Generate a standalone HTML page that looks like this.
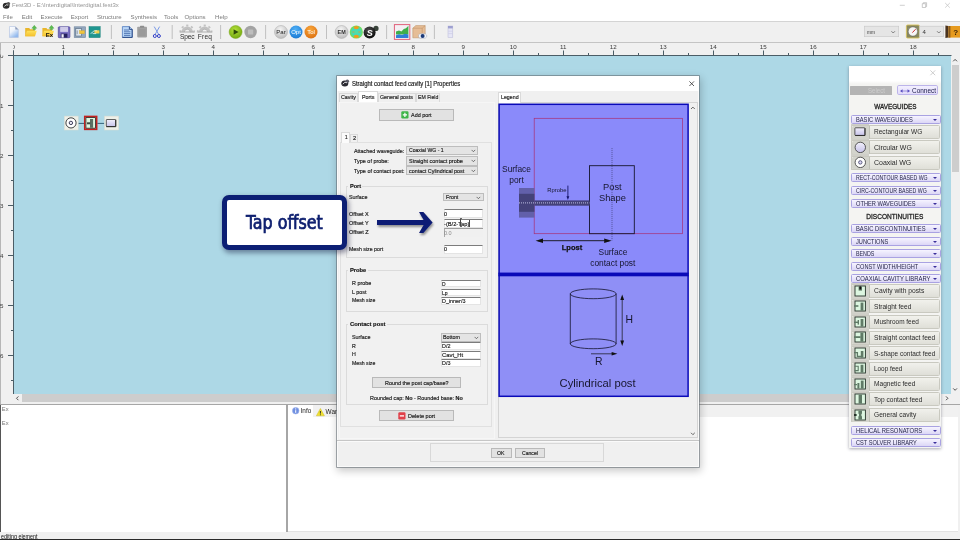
<!DOCTYPE html>
<html lang="en">
<head>
<meta charset="utf-8">
<title>Fest3D - Straight contact feed cavity Properties</title>
<style>
html,body{margin:0;padding:0;}
body{width:960px;height:540px;overflow:hidden;position:relative;background:#fff;font-family:"Liberation Sans","DejaVu Sans",sans-serif;font-size:6.5px;color:#222;}
#app{position:absolute;left:0;top:0;width:960px;height:540px;overflow:hidden;will-change:transform;}
#app div,#app span,#app svg{position:absolute;box-sizing:border-box;white-space:nowrap;}
svg text{white-space:pre;}
/* ---------- top chrome ---------- */
#titlebar{left:0;top:0;width:960px;height:11px;background:#fff;}
#titletext{left:12px;top:2.1px;font-size:6px;color:#959595;}
.wc{top:0;font-size:9px;color:#9a9a9a;}
#menubar{left:0;top:11px;width:960px;height:10px;background:#fff;}
#menubar span{top:2px;font-size:6.1px;color:#7a7a7a;}
#toolbar{left:0;top:21px;width:960px;height:22px;background:#f0f0f0;border-top:1px solid #d4d4d4;border-bottom:1px solid #c4c4c4;}
.tsep{top:3px;width:1px;height:14px;background:#b8b8b8;}
#ruler-h{left:0;top:43px;width:960px;height:13px;background:#f0f0f0;}
#ruler-v{left:0;top:56px;width:14px;height:348px;background:#f0f0f0;}
#canvas{left:14px;top:56px;width:937px;height:338px;background:#add8e6;}
</style>
</head>
<body>
<div id="app">
<!-- TITLE BAR -->
<div id="titlebar">
  <svg style="left:2px;top:1px" width="9" height="9" viewBox="0 0 9 9"><ellipse cx="4.2" cy="4.8" rx="3.4" ry="3" fill="#2a2a2a"/><circle cx="6.4" cy="2.6" r="1.7" fill="#555"/><path d="M2.3 5.6 Q4 2.6 6.2 4.2" stroke="#ddd" stroke-width="0.9" fill="none"/></svg>
  <span id="titletext">Fest3D - E:\Interdigital\Interdigital.fest3x</span>
  <svg style="left:896px;top:0" width="60" height="11" viewBox="0 0 60 11">
    <path d="M3.8 5.3h5" stroke="#c4c4c4" stroke-width="0.8"/>
    <path d="M26.3 3.7h3.4v3.8h-3.4z M27.3 3.7v-1h3.3v3.8h-0.9" stroke="#b4b4b4" stroke-width="0.7" fill="none"/>
    <path d="M49.2 3l4.6 4.6M53.8 3l-4.6 4.6" stroke="#c4c4c4" stroke-width="0.8"/>
  </svg>
</div>

<!-- MENU BAR -->
<div id="menubar">
  <span style="left:3px">File</span>
  <span style="left:21.7px">Edit</span>
  <span style="left:40.6px">Execute</span>
  <span style="left:70.7px">Export</span>
  <span style="left:96.9px">Structure</span>
  <span style="left:130.6px">Synthesis</span>
  <span style="left:164px">Tools</span>
  <span style="left:184.6px">Options</span>
  <span style="left:215px">Help</span>
</div>

<!-- TOOLBAR -->
<div id="toolbar">
  <svg style="left:0;top:0" width="960" height="20" viewBox="0 22 960 20">
    <defs>
      <linearGradient id="gNew" x1="0" y1="0" x2="0.6" y2="1"><stop offset="0" stop-color="#ffffff"/><stop offset="0.45" stop-color="#eef3fb"/><stop offset="1" stop-color="#8fb8ee"/></linearGradient>
      <linearGradient id="gFold" x1="0" y1="0" x2="0" y2="1"><stop offset="0" stop-color="#ffe25a"/><stop offset="1" stop-color="#f3bf2e"/></linearGradient>
      <radialGradient id="gGreen" cx="0.45" cy="0.35" r="0.7"><stop offset="0" stop-color="#b6e23a"/><stop offset="1" stop-color="#6fa40e"/></radialGradient>
      <radialGradient id="gGray" cx="0.45" cy="0.3" r="0.8"><stop offset="0" stop-color="#f4f4f4"/><stop offset="1" stop-color="#b4b4b4"/></radialGradient>
      <radialGradient id="gBlue" cx="0.45" cy="0.3" r="0.8"><stop offset="0" stop-color="#4fb0f6"/><stop offset="1" stop-color="#1473d0"/></radialGradient>
      <radialGradient id="gOr" cx="0.45" cy="0.3" r="0.8"><stop offset="0" stop-color="#f8a63a"/><stop offset="1" stop-color="#d96a0c"/></radialGradient>
      <radialGradient id="gRain" cx="0.5" cy="0.5" r="0.5"><stop offset="0" stop-color="#54e0a0"/><stop offset="0.6" stop-color="#3fd8c0"/><stop offset="1" stop-color="#7be04a"/></radialGradient>
      <radialGradient id="gBlk" cx="0.4" cy="0.3" r="0.8"><stop offset="0" stop-color="#4a4a4a"/><stop offset="1" stop-color="#050505"/></radialGradient>
    </defs>
    <!-- new -->
    <path d="M9.500 26.500h5.800l3 3v7.900h-8.800z" fill="url(#gNew)" stroke="#aebfe0" stroke-width="0.600"/>
    <path d="M15.300 26.500v3h3z" fill="#8e9cb8"/>
    <!-- open -->
    <path d="M25.200 28h4l1 1.300h4.600v7h-9.600z" fill="#e9b62c"/>
    <path d="M25.200 36.300l1.600-5.600h10l-1.800 5.600z" fill="url(#gFold)"/>
    <path d="M34.300 25.300l2.500 3h-1.400v1.500h-2.200v-1.500h-1.400z" fill="#5cbc50" stroke="#3a9436" stroke-width="0.300"/>
    <!-- export folder -->
    <path d="M42.400 28h4l1 1.300h4.600v7h-9.600z" fill="#e9b62c"/>
    <path d="M42.400 36.300l1.600-5.600h10l-1.800 5.600z" fill="url(#gFold)"/>
    <path d="M51.500 25.300l2.500 3h-1.400v1.500h-2.200v-1.500h-1.400z" fill="#5cbc50" stroke="#3a9436" stroke-width="0.300"/>
    <text x="45.700" y="36.800" font-family="Liberation Sans, sans-serif" font-weight="bold" font-size="6" fill="#111" textLength="7.400" lengthAdjust="spacingAndGlyphs">Ex</text>
    <!-- save -->
    <rect x="58.300" y="26.800" width="11.600" height="10.900" rx="0.800" fill="#7a70c2" stroke="#4d4496" stroke-width="0.700"/>
    <rect x="60.200" y="27.100" width="7.800" height="4.700" fill="#d9d5ee"/>
    <path d="M60.200 28.700h7.800M60.200 30.200h7.800" stroke="#b9b3de" stroke-width="0.400"/>
    <rect x="60.800" y="33.600" width="6.600" height="4" fill="#26225e"/>
    <rect x="61.500" y="34.200" width="2.200" height="3.400" fill="#f2f1fa"/>
    <!-- img1 -->
    <rect x="74.200" y="26.800" width="11.400" height="10.800" fill="#93a7be" stroke="#71869e" stroke-width="0.600"/>
    <rect x="75.800" y="28.600" width="5.600" height="7.400" fill="#dfe7ee" stroke="#55687c" stroke-width="0.600"/>
    <path d="M77.200 30.400v3.800" stroke="#55687c" stroke-width="0.600"/>
    <rect x="79.400" y="30.600" width="5.200" height="3.200" fill="#f0c43c" stroke="#c9a02a" stroke-width="0.300"/>
    <!-- img2 -->
    <rect x="89" y="26.600" width="11.200" height="11" fill="#1f958f" stroke="#17807a" stroke-width="0.500"/>
    <rect x="94.400" y="30.300" width="5" height="3.200" fill="#efd04c"/>
    <path d="M90.600 33.400c2 0 2-2.600 4-2.600h2.600M92.600 33.600h3.600" stroke="#eaf6f2" stroke-width="0.800" fill="none"/>
    <!-- doc -->
    <path d="M122.400 26.600h7l2.800 2.800v8h-9.800z" fill="#b9d6f7" stroke="#3f6fb8" stroke-width="0.700"/>
    <path d="M129.400 26.600v2.800h2.800M132.200 29.400v8h-9.800" fill="none" stroke="#24427e" stroke-width="0.900"/>
    <path d="M124 30h5M124 31.800h6.400M124 33.600h6.400M124 35.400h6.400" stroke="#3c62a4" stroke-width="0.800"/>
    <!-- clipboard gray -->
    <rect x="137.200" y="26.800" width="9.800" height="10.600" rx="0.800" fill="#a2a2a2"/>
    <rect x="140" y="25.800" width="4.200" height="2" rx="0.600" fill="#8e8e8e"/>
    <rect x="138.600" y="29.200" width="7" height="7" fill="#9a9a9a"/>
    <!-- scissors -->
    <path d="M154.2 26.6l4.6 8M159.6 26.6l-4.6 8" stroke="#7a9ae6" stroke-width="1"/>
    <circle cx="154.8" cy="36" r="1.5" fill="none" stroke="#3340c8" stroke-width="1"/>
    <circle cx="158.9" cy="36" r="1.5" fill="none" stroke="#3340c8" stroke-width="1"/>
    <!-- Spec / Freq -->
    <g fill="none" stroke="#c2c2c2" transform="translate(0 0.700)">
      <path d="M182.700 31.600a4.500 4.500 0 0 1 9 0" stroke-width="2.800"/><path d="M180.200 31.800a7 7 0 0 1 14 0" stroke-width="1.800" stroke-dasharray="2.200 2.750"/>
      <path d="M200.200 31.600a4.500 4.500 0 0 1 9 0" stroke-width="2.800"/><path d="M197.700 31.800a7 7 0 0 1 14 0" stroke-width="1.800" stroke-dasharray="2.200 2.750"/>
      <path d="M180.200 31.300h14M197.700 31.300h14" stroke-width="1.100" stroke="#adadad"/>
      <path d="M184.300 31.400a2.900 2.900 0 0 1 5.800 0M201.800 31.400a2.900 2.900 0 0 1 5.800 0" stroke-width="0.600" stroke="#9e9e9e"/>
    </g>
    <text x="180" y="38.700" font-family="Liberation Sans, sans-serif" font-size="6.600" fill="#2c2c2c" textLength="14.600" lengthAdjust="spacing">Spec</text>
    <text x="197.800" y="38.700" font-family="Liberation Sans, sans-serif" font-size="6.600" fill="#2c2c2c" textLength="14.200" lengthAdjust="spacing">Freq</text>
    <!-- play / stop -->
    <circle cx="235.6" cy="32" r="6.5" fill="url(#gGreen)" stroke="#7aa81a" stroke-width="0.5"/>
    <path d="M233.6 29.2l5 2.8l-5 2.8z" fill="#2f4a0a"/>
    <circle cx="250.6" cy="32" r="6.2" fill="#a3a3a3"/>
    <rect x="248" y="29.4" width="5.2" height="5.2" rx="0.6" fill="#bdbdbd"/>
    <!-- Par Opt Tol -->
    <circle cx="281" cy="32" r="6.5" fill="url(#gGray)" stroke="#a8a8a8" stroke-width="0.5"/>
    <text x="281" y="34.2" text-anchor="middle" font-family="Liberation Sans, sans-serif" font-size="6" fill="#222">Par</text>
    <circle cx="296" cy="32" r="6.5" fill="url(#gBlue)"/>
    <text x="296" y="34.2" text-anchor="middle" font-family="Liberation Sans, sans-serif" font-size="6" fill="#fff">Opt</text>
    <circle cx="311" cy="32" r="6.5" fill="url(#gOr)"/>
    <text x="311" y="34.2" text-anchor="middle" font-family="Liberation Sans, sans-serif" font-size="6" fill="#fff">Tol</text>
    <!-- EM / field / S -->
    <circle cx="341.6" cy="32" r="6.5" fill="url(#gGray)" stroke="#a8a8a8" stroke-width="0.5"/>
    <text x="341.6" y="34" text-anchor="middle" font-family="Liberation Sans, sans-serif" font-weight="bold" font-size="5.4" fill="#333">EM</text>
    <circle cx="356.3" cy="32" r="6.6" fill="url(#gRain)"/>
    <ellipse cx="356.3" cy="27.6" rx="2.6" ry="1.7" fill="#f29a1c"/>
    <ellipse cx="356.3" cy="36.4" rx="2.6" ry="1.7" fill="#f29a1c"/>
    <path d="M352.4 32h2M358.4 32h2" stroke="#e8a020" stroke-width="0.9"/>
    <circle cx="376" cy="28.4" r="2.6" fill="#39433a"/>
    <circle cx="369.6" cy="32.4" r="6" fill="url(#gBlk)"/>
    <text x="369.8" y="35.6" text-anchor="middle" font-family="Liberation Sans, sans-serif" font-weight="bold" font-style="italic" font-size="9" fill="#fff">S</text>
    <!-- graph -->
    <rect x="394.4" y="24.6" width="15.4" height="14.8" fill="#f4f0f4" stroke="#e0607a" stroke-width="1"/>
    <path d="M396 31.6l3-1.2 2.4 1 2.4-2.4 2.2-.8 2.4-2.4v8.600h-12.400z" fill="#3fae4a"/>
    <path d="M396 35.2l3-1 3 .8 3-1.200 3.4.6v3.600h-12.400z" fill="#2f7fd8"/>
    <!-- box w/ eye -->
    <path d="M412.800 28.200l3-2.600h9.400v9.400l-3 2.800h-9.400z" fill="#e6bd96" stroke="#b88a5e" stroke-width="0.5"/>
    <path d="M412.800 28.200h9.400v9.600M422.200 28.200l3-2.600" stroke="#b88a5e" stroke-width="0.5" fill="none"/>
    <ellipse cx="422.600" cy="36" rx="4.200" ry="2.400" fill="#f4f6fa" stroke="#8a94a8" stroke-width="0.4"/>
    <circle cx="422.600" cy="36" r="2" fill="#1c3a78"/>
    <!-- small doc -->
    <rect x="448" y="26" width="4.800" height="11.600" fill="#e6e6f6" stroke="#b9b9d8" stroke-width="0.5"/>
    <rect x="448" y="26" width="4.800" height="2.400" fill="#9ea0d0"/>
    <path d="M448.300 31.200h4.200M448.300 33.600h4.200" stroke="#c4c4e0" stroke-width="0.5"/>
    <!-- combos -->
    <rect x="864.300" y="26.200" width="34.400" height="10.500" fill="#e5e5e5" stroke="#c6c6c6" stroke-width="0.6"/>
    <text x="867" y="33.500" font-family="Liberation Sans, sans-serif" font-size="6" fill="#333" textLength="7.800" lengthAdjust="spacingAndGlyphs">mm</text>
    <path d="M891.400 31.200l1.800 1.800 1.800-1.800" stroke="#555" stroke-width="0.7" fill="none"/>
    <rect x="906.400" y="25" width="13" height="13" rx="1.200" fill="#86865e" stroke="#d8c25a" stroke-width="0.9"/>
    <circle cx="912.900" cy="31.500" r="4.600" fill="#f6f6f6" stroke="#555" stroke-width="0.4"/>
    <path d="M912.400 32.600l3.200-3.400" stroke="#d03030" stroke-width="1"/>
    <rect x="919.600" y="26.200" width="24" height="10.500" fill="#e5e5e5" stroke="#c6c6c6" stroke-width="0.6"/>
    <text x="922.400" y="33.600" font-family="Liberation Sans, sans-serif" font-size="6" fill="#333">4</text>
    <path d="M937 31.200l1.800 1.800 1.800-1.800" stroke="#555" stroke-width="0.7" fill="none"/>
    <!-- help book -->
    <path d="M945.400 25.400l3 .6v11.600l-3 .4z" fill="#4a3420"/>
    <path d="M948.400 26h11.600v11.600h-11.600z" fill="#e69a1e"/>
    <path d="M948.400 26h2v11.600h-2z" fill="#8a5a1a"/>
    <text x="955.600" y="35" text-anchor="middle" font-family="Liberation Sans, sans-serif" font-weight="bold" font-size="8" fill="#3a2208">?</text>
    <!-- separators -->
    <g stroke="#b4b4b4" stroke-width="0.8">
      <path d="M111.400 25v14M172.200 25v14M220.600 25v14M265.600 25v14M326.500 25v14M386.600 25v14M434.400 25v14"/>
    </g>
  </svg>
</div>
<div id="ruler-h"></div>
<div id="ruler-v"></div>
<div id="canvas"></div>
<!-- RULERS -->
<svg style="left:0;top:42px" width="960" height="362" viewBox="0 42 960 362">
<rect x="0" y="43" width="0.8" height="361" fill="#a8a8a8"/>
<path d="M8 55.5H951.5" stroke="#4b5d66" stroke-width="1"/>
<path d="M13.5 50.5V394" stroke="#4b5d66" stroke-width="1"/>
<path d="M13.5 50.5V55M38.5 53V55M63.5 50.5V55M88.5 53V55M113.5 50.5V55M138.5 53V55M163.5 50.5V55M188.5 53V55M213.5 50.5V55M238.5 53V55M263.5 50.5V55M288.5 53V55M313.5 50.5V55M338.5 53V55M363.5 50.5V55M388.5 53V55M413.5 50.5V55M438.5 53V55M463.5 50.5V55M488.5 53V55M513.5 50.5V55M538.5 53V55M563.5 50.5V55M588.5 53V55M613.5 50.5V55M638.5 53V55M663.5 50.5V55M688.5 53V55M713.5 50.5V55M738.5 53V55M763.5 50.5V55M788.5 53V55M813.5 50.5V55M838.5 53V55M863.5 50.5V55M888.5 53V55M913.5 50.5V55M938.5 53V55" stroke="#4b5d66" stroke-width="1"/>
<path d="M8 105.5H13M8 155.5H13M8 205.5H13M8 255.5H13M8 305.5H13M8 355.5H13M11 80.5H13M11 130.5H13M11 180.5H13M11 230.5H13M11 280.5H13M11 330.5H13M11 380.5H13" stroke="#4b5d66" stroke-width="1"/>
<g font-family="Liberation Sans, sans-serif" font-size="6.2" fill="#3a3a3a" text-anchor="middle">
<text x="13.2" y="49.4">0</text><text x="63.2" y="49.4">1</text><text x="113.2" y="49.4">2</text><text x="163.2" y="49.4">3</text><text x="213.2" y="49.4">4</text><text x="263.2" y="49.4">5</text><text x="313.2" y="49.4">6</text><text x="363.2" y="49.4">7</text><text x="413.2" y="49.4">8</text><text x="463.2" y="49.4">9</text><text x="513.2" y="49.4">10</text><text x="563.2" y="49.4">11</text><text x="613.2" y="49.4">12</text><text x="663.2" y="49.4">13</text><text x="713.2" y="49.4">14</text><text x="763.2" y="49.4">15</text><text x="813.2" y="49.4">16</text><text x="863.2" y="49.4">17</text><text x="913.2" y="49.4">18</text>
<text x="1.6" y="57.6">0</text><text x="1.6" y="107.6">1</text><text x="1.6" y="157.6">2</text><text x="1.6" y="207.6">3</text><text x="1.6" y="257.6">4</text><text x="1.6" y="307.6">5</text><text x="1.6" y="357.6">6</text>
</g>
<rect x="9" y="43.500" width="4.300" height="6.500" fill="#f0f0f0"/><rect x="0.800" y="50" width="6" height="5.600" fill="#f0f0f0"/>
</svg>
<!-- SCROLLBARS -->
<div style="left:14px;top:394px;width:946px;height:10px;background:#f0f0f0;"></div>
<div style="left:22px;top:394.4px;width:917px;height:7.8px;background:#cdcdcd;"></div>
<svg style="left:14px;top:394px" width="946" height="9" viewBox="14 394 946 9"><path d="M18.400 396.400l-1.900 1.900 1.900 1.900M946 396.400l1.900 1.900-1.900 1.900" stroke="#3c3c3c" stroke-width="0.9" fill="none"/></svg>
<div style="left:951px;top:56px;width:9px;height:338px;background:#f0f0f0;"></div>
<div style="left:952.2px;top:64.8px;width:6.7px;height:107px;background:#cdcdcd;"></div>
<svg style="left:951px;top:56px" width="9" height="338" viewBox="951 56 9 338"><path d="M953.200 61.300l1.900-1.900 1.900 1.900M953.200 388.400l1.900 1.900 1.900-1.900" stroke="#3c3c3c" stroke-width="0.900" fill="none"/></svg>

<!-- BOTTOM PANELS -->
<div style="left:0;top:403.800px;width:960px;height:1.200px;background:#a6a6a6;"></div>
<div style="left:0;top:405px;width:286.400px;height:127px;background:#fff;border-left:1.200px solid #555;">
  <span style="left:0.800px;top:1.200px;font-size:5.800px;color:#777;">Ex</span>
  <span style="left:0.800px;top:15px;font-size:5.800px;color:#777;">Ex</span>
</div>
<div style="left:286.400px;top:405px;width:1.600px;height:127px;background:#a6a6a6;"></div>
<div style="left:288px;top:405px;width:672px;height:127px;background:#fff;">
  <div style="left:0;top:0;width:670px;height:12px;background:#f1f1f1;"></div>
  <div style="left:0;top:0;width:25px;height:12.400px;background:#fff;"></div>
  <svg style="left:3.600px;top:2.400px" width="8" height="8" viewBox="0 0 8 8"><circle cx="3.700" cy="3.700" r="3.300" fill="#6f8fe0" stroke="#9fb4ec" stroke-width="0.600"/><path d="M3.700 3.200v2.600" stroke="#fff" stroke-width="1"/><circle cx="3.700" cy="1.900" r="0.600" fill="#fff"/></svg>
  <span style="left:12.600px;top:2.200px;font-size:6.400px;color:#222;">Info</span>
  <svg style="left:27.600px;top:2.600px" width="9" height="9" viewBox="0 0 9 9"><path d="M4.400 0.500l4 7.300h-8z" fill="#f2e230" stroke="#c8b820" stroke-width="0.500"/><path d="M4.400 3v2.600" stroke="#222" stroke-width="0.900"/><circle cx="4.400" cy="6.700" r="0.500" fill="#222"/></svg>
  <span style="left:37.600px;top:2.800px;font-size:6.400px;color:#222;">Warnings</span>
  <div style="left:669.600px;top:0;width:0.800px;height:126px;background:#e2e2e2;"></div>
  <div style="left:670.400px;top:0;width:1.600px;height:127px;background:#f0f0f0;"></div>
  <div style="left:0;top:126px;width:670px;height:0.800px;background:#e2e2e2;"></div>
</div>
<!-- STATUS BAR -->
<div style="left:0;top:532px;width:960px;height:8px;background:#f0f0f0;">
  <span style="transform:scaleX(0.844);transform-origin:0 50%;left:1.2px;top:0.5px;font-size:6.4px;color:#111;">editing element</span>
</div>
<div style="left:0;top:538.600px;width:960px;height:1.400px;background:#2a2a2a;"></div>
<!-- CANVAS NODES -->
<svg style="left:60px;top:112px" width="64" height="22" viewBox="60 112 64 22">
  <defs><linearGradient id="gLav" x1="0" y1="0" x2="0" y2="1"><stop offset="0" stop-color="#f2f0fb"/><stop offset="1" stop-color="#c6c2ea"/></linearGradient></defs>
  <path d="M78 123.400h6.400M97.400 123.400h7" stroke="#34627a" stroke-width="1"/>
  <rect x="64.300" y="116.100" width="13.900" height="13.900" fill="#eef0e8" stroke="#d9dbd0" stroke-width="0.500"/>
  <circle cx="71" cy="122.900" r="5.100" fill="#fff" stroke="#2c2c2c" stroke-width="0.900"/>
  <circle cx="70.900" cy="122.900" r="1.700" fill="#ecebf6" stroke="#3c3c58" stroke-width="1"/>
  <rect x="84.700" y="116.400" width="12" height="13" fill="#ddf6df" stroke="#c4201e" stroke-width="1.500"/>
  <rect x="85.900" y="117.600" width="9.600" height="10.600" fill="none" stroke="#2a1414" stroke-width="0.800"/>
  <rect x="90" y="119" width="3.100" height="8.800" fill="#5a6f62"/>
  <rect x="87" y="122.300" width="3.200" height="2" fill="#3c4a42"/>
  <rect x="104.500" y="116.100" width="14.200" height="13.900" fill="#eef0e8" stroke="#d9dbd0" stroke-width="0.500"/>
  <rect x="106.300" y="119.500" width="9.300" height="7" rx="0.500" fill="url(#gLav)" stroke="#3a3a3a" stroke-width="0.800"/>
  <path d="M106.300 126.700h9.500v-7" fill="none" stroke="#2a2a2a" stroke-width="1"/>
</svg>
<!-- ELEMENT PALETTE -->
<style>
#pal{left:849px;top:66px;width:92.400px;height:382px;background:#f4f4f2;box-shadow:0 1px 3px rgba(60,60,80,0.450);font-family:"Liberation Sans","DejaVu Sans",sans-serif;}
#pal .hd{left:2px;width:89.600px;height:9px;border:0.700px solid #a9a2e2;border-radius:1.500px;background:linear-gradient(#f6f4ff,#dcd7f6);font-size:6.3px;color:#26264a;line-height:7.8px;}
#pal .hd span{left:3.8px;top:0;}
#pal .fx{transform-origin:0 50%;} #pal .fc{transform-origin:50% 50%;position:relative !important;display:inline-block;}
#pal .hd i{position:absolute;right:3px;top:3px;width:0;height:0;border-left:2.2px solid transparent;border-right:2.2px solid transparent;border-top:2.4px solid #3a2f9a;}
#pal .ttl{left:0;width:92px;text-align:center;font-size:7.3px;color:#222;-webkit-text-stroke:0.3px #222;}
#pal .row{left:1.800px;width:88.800px;height:14px;background:linear-gradient(#f1f1ec,#dfdfd8);border:0.600px solid #c9c9c0;border-radius:1.500px;}
#pal .row b{position:absolute;left:0;top:0;width:17.6px;height:12.800px;background:#d3d4cc;border-right:0.600px solid #bfc0b6;border-radius:1.500px 0 0 1.500px;}
#pal .row span{left:22.3px;top:2.600px;font-size:6.7px;color:#2a2a2a;}
#pal .row svg{left:2.4px;top:-0.2px;}
#pal .strip{left:1.7px;width:18.2px;background:#cfcfc8;}
</style>
<div id="pal">
<div style="left:0;top:0;width:92.4px;height:18.4px;background:linear-gradient(#fff 0,#fff 82%,#f4f4f2 100%);"></div>
<svg style="left:80px;top:2.500px" width="8" height="8" viewBox="0 0 8 8"><path d="M1.400 1.400l4.800 4.800M6.200 1.400l-4.800 4.800" stroke="#c2c2c2" stroke-width="0.800"/></svg>
<div style="left:1.4px;top:19.6px;width:41.8px;height:9.8px;background:#b4b4b4;border-radius:0.6px;"><span class="fx" style="transform:scaleX(0.928);left:17.6px;top:1px;font-size:6.6px;color:#cdcdcd;">Select</span></div>
<div style="left:47.600px;top:19.400px;width:41.400px;height:10px;background:linear-gradient(#f3f0ff,#e2dcfa);border-radius:1.8px;border:0.7px solid #bcb4ea;"><svg style="left:2.6px;top:2.6px" width="11" height="4" viewBox="0 0 12 4"><path d="M1.200 2h8.600" stroke="#6e62cc" stroke-width="0.700"/><path d="M0 2l2.800-1.800v3.600zM11 2l-2.800-1.800v3.600z" fill="#5a4ec0"/></svg><span class="fx" style="transform:scaleX(0.948);left:14.6px;top:0.9px;font-size:6.8px;color:#20204e;">Connect</span></div>
<div class="strip" style="top:57.9px;height:46.1px"></div>
<div class="strip" style="top:217.2px;height:139.2px"></div>
<div class="ttl" style="top:36.1px"><span class="fc" style="transform:scaleX(0.871);">WAVEGUIDES</span></div>
<div class="hd" style="top:48.5px"><span class="fx" style="transform:scaleX(0.905);">BASIC WAVEGUIDES</span><i></i></div>
<div class="row" style="top:58.8px"><b></b><svg width="12" height="12" viewBox="0 0 12 12"><rect x="0.900" y="1.800" width="10" height="7.600" rx="0.600" fill="url(#gLav)" stroke="#333" stroke-width="0.800"/><path d="M1.200 9.500h9.800v-7.400" fill="none" stroke="#2a2a2a" stroke-width="0.900"/></svg><span class="fx" style="transform:scaleX(0.979);">Rectangular WG</span></div>
<div class="row" style="top:74.2px"><b></b><svg width="12" height="12" viewBox="0 0 12 12"><circle cx="6.300" cy="6.400" r="5.200" fill="url(#gLav)" stroke="#333" stroke-width="0.800"/></svg><span class="fx" style="transform:scaleX(1.038);">Circular WG</span></div>
<div class="row" style="top:89.6px"><b></b><svg width="12" height="12" viewBox="0 0 12 12"><circle cx="6.300" cy="6.400" r="5.200" fill="#fff" stroke="#333" stroke-width="0.800"/><circle cx="6.300" cy="6.400" r="1.700" fill="#dcd8f4" stroke="#3c3c66" stroke-width="0.800"/></svg><span class="fx" style="transform:scaleX(1.045);">Coaxial WG</span></div>
<div class="hd" style="top:107.4px"><span class="fx" style="transform:scaleX(0.830);">RECT-CONTOUR BASED WG</span><i></i></div>
<div class="hd" style="top:120.1px"><span class="fx" style="transform:scaleX(0.833);">CIRC-CONTOUR BASED WG</span><i></i></div>
<div class="hd" style="top:132.8px"><span class="fx" style="transform:scaleX(0.906);">OTHER WAVEGUIDES</span><i></i></div>
<div class="ttl" style="top:145.6px"><span class="fc" style="transform:scaleX(0.895);">DISCONTINUITIES</span></div>
<div class="hd" style="top:157.9px"><span class="fx" style="transform:scaleX(0.921);">BASIC DISCONTINUITIES</span><i></i></div>
<div class="hd" style="top:170.5px"><span class="fx" style="transform:scaleX(0.896);">JUNCTIONS</span><i></i></div>
<div class="hd" style="top:183.0px"><span class="fx" style="transform:scaleX(0.843);">BENDS</span><i></i></div>
<div class="hd" style="top:195.6px"><span class="fx" style="transform:scaleX(0.892);">CONST WIDTH/HEIGHT</span><i></i></div>
<div class="hd" style="top:208.0px"><span class="fx" style="transform:scaleX(0.936);">COAXIAL CAVITY LIBRARY</span><i></i></div>
<div class="row" style="top:217.9px"><b></b><svg width="12" height="12" viewBox="0 0 12 12"><rect x="1" y="1" width="10.400" height="10" fill="#dcf6e0" stroke="#26342a" stroke-width="0.900"/><rect x="4.600" y="1.400" width="3.400" height="4.200" fill="#5f7a66"/><rect x="5.400" y="1.400" width="1.800" height="3" fill="#111"/></svg><span class="fx" style="transform:scaleX(1.000);">Cavity with posts</span></div>
<div class="row" style="top:233.4px"><b></b><svg width="12" height="12" viewBox="0 0 12 12"><rect x="1" y="1" width="10.400" height="10" fill="#dcf6e0" stroke="#26342a" stroke-width="0.900"/><rect x="6.600" y="2.600" width="2.800" height="8" fill="#5f7a66"/><rect x="0" y="5.200" width="4.400" height="1.600" fill="#5f7a66"/></svg><span class="fx" style="transform:scaleX(0.984);">Straight feed</span></div>
<div class="row" style="top:248.9px"><b></b><svg width="12" height="12" viewBox="0 0 12 12"><rect x="1" y="1" width="10.400" height="10" fill="#dcf6e0" stroke="#26342a" stroke-width="0.900"/><rect x="6.600" y="3" width="2.800" height="7.600" fill="#5f7a66"/><rect x="0" y="5.600" width="4" height="1.400" fill="#5f7a66"/><rect x="3.600" y="4" width="1.400" height="4.600" fill="#5f7a66"/></svg><span class="fx" style="transform:scaleX(0.966);">Mushroom feed</span></div>
<div class="row" style="top:264.5px"><b></b><svg width="12" height="12" viewBox="0 0 12 12"><rect x="1" y="1" width="10.400" height="10" fill="#dcf6e0" stroke="#26342a" stroke-width="0.900"/><rect x="6.400" y="1.600" width="3" height="9" fill="#5f7a66"/><rect x="0" y="5.200" width="6.600" height="1.800" fill="#5f7a66"/></svg><span class="fx" style="transform:scaleX(0.999);">Straight contact feed</span></div>
<div class="row" style="top:280.0px"><b></b><svg width="12" height="12" viewBox="0 0 12 12"><rect x="1" y="1" width="10.400" height="10" fill="#dcf6e0" stroke="#26342a" stroke-width="0.900"/><rect x="6.800" y="4" width="2.600" height="6.600" fill="#5f7a66"/><path d="M0 5.600h3.400v3.800h3.600" stroke="#5f7a66" stroke-width="1.300" fill="none"/></svg><span class="fx" style="transform:scaleX(0.970);">S-shape contact feed</span></div>
<div class="row" style="top:295.5px"><b></b><svg width="12" height="12" viewBox="0 0 12 12"><rect x="1" y="1" width="10.400" height="10" fill="#dcf6e0" stroke="#26342a" stroke-width="0.900"/><rect x="6.600" y="2.800" width="2.800" height="7.800" fill="#5f7a66"/><path d="M0.600 4.200h3.600v4.400h-3.600" stroke="#5f7a66" stroke-width="1.100" fill="none"/></svg><span class="fx" style="transform:scaleX(0.954);">Loop feed</span></div>
<div class="row" style="top:310.9px"><b></b><svg width="12" height="12" viewBox="0 0 12 12"><rect x="1" y="1" width="10.400" height="10" fill="#dcf6e0" stroke="#26342a" stroke-width="0.900"/><rect x="6.800" y="2.600" width="2.800" height="8" fill="#5f7a66"/><rect x="3.400" y="5" width="2" height="5.600" fill="#5f7a66"/><rect x="0" y="6" width="3" height="1.200" fill="#5f7a66"/></svg><span class="fx" style="transform:scaleX(0.983);">Magnetic feed</span></div>
<div class="row" style="top:326.3px"><b></b><svg width="12" height="12" viewBox="0 0 12 12"><rect x="1" y="1" width="10.400" height="10" fill="#dcf6e0" stroke="#26342a" stroke-width="0.900"/><rect x="4.600" y="1.600" width="3.400" height="9" fill="#5f7a66"/></svg><span class="fx" style="transform:scaleX(0.986);">Top contact feed</span></div>
<div class="row" style="top:341.8px"><b></b><svg width="12" height="12" viewBox="0 0 12 12"><rect x="1" y="1" width="10.400" height="10" fill="#dcf6e0" stroke="#26342a" stroke-width="0.900"/><rect x="4.400" y="1.600" width="3.600" height="9" fill="#5f7a66"/><rect x="0" y="5" width="2.600" height="2" fill="#26342a"/><rect x="3" y="4.800" width="2" height="2.400" fill="#dcf6e0"/><rect x="7.400" y="4.800" width="2.400" height="2.400" fill="#dcf6e0"/></svg><span class="fx" style="transform:scaleX(0.987);">General cavity</span></div>
<div class="hd" style="top:360.2px"><span class="fx" style="transform:scaleX(0.930);">HELICAL RESONATORS</span><i></i></div>
<div class="hd" style="top:372.4px"><span class="fx" style="transform:scaleX(0.894);">CST SOLVER LIBRARY</span><i></i></div>
</div>
<!-- PROPERTIES DIALOG -->
<style>
#dlg{left:336.6px;top:76px;width:362.4px;height:391px;background:#f0f0f0;box-shadow:inset 0 0 0 1px #fafafa,0 0 0 0.8px rgba(100,108,115,0.72),1px 3px 8px 1px rgba(0,0,0,0.22);}
#dlg .t{font-size:6.2px;line-height:7.2px;height:7.2px;color:#1c1c1c;transform-origin:0 50%;-webkit-text-stroke:0.18px #1c1c1c;}
#dlg .b{font-weight:bold;color:#111;}
#dlg .g{color:#8c8c8c;-webkit-text-stroke:0;}
#dlg .cb{background:#e4e4e4;border:0.6px solid #bdbdbd;}
#dlg .fld{background:#fff;border:0.6px solid #e4e4e4;border-top:0.8px solid #7c7c7c;}
#dlg .btn{background:#e2e2e2;border:0.6px solid #b9b9b9;}
#dlg .gb{border:0.6px solid #dbdbdb;}
#dlg .lbl{background:#f0f0f0;}
</style>
<div id="dlg">
<div style="left:0px;top:0px;width:362.4px;height:15.4px;background:#fff;"></div>
<svg style="left:4.2px;top:3px" width="9" height="8" viewBox="0 0 9 8"><ellipse cx="3.8" cy="4.4" rx="3.5" ry="3" fill="#2c2c34"/><circle cx="6.3" cy="2.2" r="1.8" fill="#5a5a66"/><path d="M1.8 5.2Q3.8 2 6 3.8" stroke="#e6e6ea" stroke-width="0.9" fill="none"/></svg>
<span class="t " style="transform:scaleX(0.929);left:15.1px;top:3.9px;font-size:6.4px;color:#222;">Straight contact feed cavity [1] Properties</span>
<svg style="left:351.8px;top:3.5px" width="8" height="8" viewBox="0 0 8 8"><path d="M1.4 1.4l4.6 4.6M6 1.4l-4.6 4.6" stroke="#333" stroke-width="0.8"/></svg>
<div style="left:2.2px;top:16.8px;width:19.2px;height:9.4px;background:#f0f0f0;border:0.6px solid #dadada;border-bottom:none;"></div>
<div style="left:41px;top:16.8px;width:38.2px;height:9.4px;background:#f0f0f0;border:0.6px solid #dadada;border-bottom:none;"></div>
<div style="left:79.2px;top:16.8px;width:24px;height:9.4px;background:#f0f0f0;border:0.6px solid #dadada;border-bottom:none;"></div>
<div style="left:21.4px;top:15.4px;width:19.6px;height:11.2px;background:#fff;border:0.6px solid #dadada;border-bottom:none;"></div>
<span class="t " style="transform:scaleX(0.866);left:4.3px;top:17.3px;">Cavity</span>
<span class="t " style="transform:scaleX(0.865);left:25.1px;top:16.7px;">Ports</span>
<span class="t " style="transform:scaleX(0.851);left:43.4px;top:17.3px;">General posts</span>
<span class="t " style="transform:scaleX(0.835);left:81.2px;top:17.3px;">EM Field</span>
<div style="left:2px;top:26.2px;width:156.8px;height:336.4px;background:#f1f1f1;border:0.6px solid #f6f6f6;"></div>
<div class="btn" style="left:42.6px;top:33.4px;width:74.6px;height:11.2px;"></div>
<svg style="left:64.4px;top:35.2px" width="8" height="8" viewBox="0 0 8 8"><rect x="0.3" y="0.3" width="7.2" height="7.2" rx="1.2" fill="#3fb54a"/><path d="M1.8 3.9h4.2M3.9 1.8v4.2" stroke="#fff" stroke-width="1.2"/></svg>
<span class="t " style="transform:scaleX(0.881);left:74.4px;top:35px;">Add port</span>
<div style="left:3.8px;top:66px;width:151.4px;height:285.2px;background:#f1f1f1;border:0.6px solid #e0e0e0;"></div>
<div style="left:4.6px;top:56px;width:9px;height:10.6px;background:#fbfbfb;border:0.6px solid #dadada;border-bottom:none;"></div>
<div style="left:13.6px;top:57.8px;width:7.8px;height:8.2px;background:#f0f0f0;border:0.6px solid #dadada;border-bottom:none;"></div>
<span class="t " style="transform:scaleX(0.753);left:8px;top:57.1px;">1</span>
<span class="t " style="transform:scaleX(0.927);left:16px;top:58.1px;">2</span>
<span class="t " style="transform:scaleX(0.874);left:17.4px;top:70.5px;">Attached waveguide:</span>
<div class="cb" style="left:69.9px;top:69.6px;width:72px;height:9.7px;"></div>
<span class="t " style="transform:scaleX(0.825);left:72.5px;top:70.4px;">Coaxial WG - 1</span>
<svg style="left:134.5px;top:72.8px" width="5" height="4" viewBox="0 0 5 4"><path d="M0.6 0.9l1.8 1.8 1.8-1.800" stroke="#444" stroke-width="0.7" fill="none"/></svg>
<span class="t " style="transform:scaleX(0.882);left:17.4px;top:80.8px;">Type of probe:</span>
<div class="cb" style="left:69.9px;top:80px;width:72px;height:9.5px;"></div>
<span class="t " style="transform:scaleX(0.890);left:72.5px;top:80.8px;">Straight contact probe</span>
<svg style="left:134.5px;top:83.2px" width="5" height="4" viewBox="0 0 5 4"><path d="M0.6 0.9l1.8 1.8 1.8-1.800" stroke="#444" stroke-width="0.7" fill="none"/></svg>
<span class="t " style="transform:scaleX(0.884);left:17.4px;top:90.9px;">Type of contact post:</span>
<div class="cb" style="left:69.9px;top:90.1px;width:72px;height:9.3px;"></div>
<span class="t " style="transform:scaleX(0.869);left:72.5px;top:90.8px;">contact Cylindrical post</span>
<svg style="left:134.5px;top:93.2px" width="5" height="4" viewBox="0 0 5 4"><path d="M0.6 0.9l1.8 1.8 1.8-1.800" stroke="#444" stroke-width="0.7" fill="none"/></svg>
<div class="gb" style="left:9px;top:109.8px;width:142px;height:72px;"></div>
<div style="left:11.6px;top:106.8px;width:14.2px;height:6px;background:#f1f1f1;"></div>
<span class="t b" style="transform:scaleX(0.897);left:13.1px;top:105.8px;">Port</span>
<span class="t " style="transform:scaleX(0.867);left:12.7px;top:117px;">Surface</span>
<div class="cb" style="left:106.5px;top:116.6px;width:40.5px;height:8.9px;"></div>
<span class="t " style="transform:scaleX(0.851);left:109.4px;top:117.1px;">Front</span>
<svg style="left:139.6px;top:119.5px" width="5" height="4" viewBox="0 0 5 4"><path d="M0.6 0.9l1.8 1.8 1.8-1.800" stroke="#444" stroke-width="0.7" fill="none"/></svg>
<span class="t " style="transform:scaleX(0.885);left:12.7px;top:133.5px;">Offset X</span>
<div class="fld" style="left:107px;top:133.4px;width:39.2px;height:8.9px;"></div>
<span class="t " style="transform:scaleX(0.869);left:107.9px;top:134px;">0</span>
<span class="t " style="transform:scaleX(0.890);left:12.7px;top:142.8px;">Offset Y</span>
<div class="fld" style="left:107px;top:143px;width:39.2px;height:9px;"></div>
<span class="t " style="transform:scaleX(0.919);left:107.9px;top:143.6px;">-(B/2-Tap)</span>
<span class="t " style="transform:scaleX(0.899);left:12.7px;top:152.4px;">Offset Z</span>
<div style="border-top:0.7px solid #9c9c9c;border-left:0.6px solid #a8a8a8;background:#f0f0f0;left:107px;top:152.1px;width:39.2px;height:9.3px;"></div>
<span class="t g" style="transform:scaleX(0.894);left:107.9px;top:152.8px;">0.0</span>
<span class="t " style="transform:scaleX(0.848);left:12.7px;top:168.8px;">Mesh size port</span>
<div class="fld" style="left:107px;top:169px;width:39.2px;height:8.6px;"></div>
<span class="t " style="transform:scaleX(0.869);left:107.9px;top:169.4px;">0</span>
<div style="left:123.9px;top:142.6px;width:0.5px;height:8px;background:#444;"></div>
<div style="left:123.1px;top:142.4px;width:2.1px;height:0.5px;background:#666;"></div>
<div style="left:123.1px;top:150.3px;width:2.1px;height:0.5px;background:#666;"></div>
<div style="left:132.6px;top:144.2px;width:0.5px;height:6.8px;background:#444;"></div>
<div class="gb" style="left:9px;top:194px;width:142px;height:41.6px;"></div>
<div style="left:11.6px;top:191px;width:19.4px;height:6px;background:#f1f1f1;"></div>
<span class="t b" style="transform:scaleX(0.929);left:13.1px;top:190px;">Probe</span>
<span class="t " style="transform:scaleX(0.872);left:15.1px;top:203.4px;">R probe</span>
<div class="fld" style="left:104.6px;top:203.8px;width:40px;height:7.7px;"></div>
<span class="t " style="transform:scaleX(0.806);left:105.5px;top:203.7px;">D</span>
<span class="t " style="transform:scaleX(0.865);left:15.1px;top:212.2px;">L post</span>
<div class="fld" style="left:104.6px;top:212.6px;width:40px;height:7.5px;"></div>
<span class="t " style="transform:scaleX(0.813);left:105.5px;top:212.5px;">Lp</span>
<span class="t " style="transform:scaleX(0.836);left:15.1px;top:220.4px;">Mesh size</span>
<div class="fld" style="left:104.6px;top:221px;width:40px;height:7.5px;"></div>
<span class="t " style="transform:scaleX(0.872);left:105.5px;top:220.8px;">D_inner/3</span>
<div class="gb" style="left:9px;top:247.6px;width:142px;height:81.7px;"></div>
<div style="left:11.6px;top:244.6px;width:38.4px;height:6px;background:#f1f1f1;"></div>
<span class="t b" style="transform:scaleX(0.934);left:13.1px;top:243.6px;">Contact post</span>
<span class="t " style="transform:scaleX(0.867);left:15.1px;top:257.1px;">Surface</span>
<div class="cb" style="left:104.6px;top:257.2px;width:40px;height:8.4px;"></div>
<span class="t " style="transform:scaleX(0.862);left:106.5px;top:257.4px;">Bottom</span>
<svg style="left:137.2px;top:259.8px" width="5" height="4" viewBox="0 0 5 4"><path d="M0.6 0.9l1.8 1.8 1.8-1.800" stroke="#444" stroke-width="0.7" fill="none"/></svg>
<span class="t " style="transform:scaleX(0.850);left:15.1px;top:265.7px;">R</span>
<div class="fld" style="left:104.6px;top:266.4px;width:40px;height:7.6px;"></div>
<span class="t " style="transform:scaleX(0.871);left:105.5px;top:266.3px;">D/2</span>
<span class="t " style="transform:scaleX(0.850);left:15.1px;top:274.1px;">H</span>
<div class="fld" style="left:104.6px;top:275px;width:40px;height:7.6px;"></div>
<span class="t " style="transform:scaleX(0.948);left:105.5px;top:274.9px;">Cavt_Ht</span>
<span class="t " style="transform:scaleX(0.836);left:15.1px;top:282.6px;">Mesh size</span>
<div class="fld" style="left:104.6px;top:283.2px;width:40px;height:7.4px;"></div>
<span class="t " style="transform:scaleX(0.871);left:105.5px;top:283px;">D/3</span>
<div class="btn" style="left:35.6px;top:301.2px;width:88.6px;height:11.2px;"></div>
<span class="t " style="transform:scaleX(0.879);left:48px;top:302.8px;">Round the post cap/base?</span>
<span class="t" style="transform:scaleX(0.875);left:33.1px;top:317.6px;">Rounded cap: <b>No</b> - Rounded base: <b>No</b></span>
<div class="btn" style="left:42.7px;top:334.2px;width:74.5px;height:11.2px;"></div>
<svg style="left:61.6px;top:336px" width="8" height="8" viewBox="0 0 8 8"><rect x="0.3" y="0.3" width="7.2" height="7.2" rx="1.2" fill="#e0404a"/><path d="M1.8 3.900h4.200" stroke="#fff" stroke-width="1.300"/></svg>
<span class="t " style="transform:scaleX(0.895);left:71.2px;top:335.8px;">Delete port</span>
<div style="left:0px;top:363.9px;width:362.4px;height:0.8px;background:#c6c6c6;"></div>
<div style="left:0px;top:364.7px;width:362.4px;height:0.8px;background:#fafafa;"></div>
<div style="left:93.8px;top:367.4px;width:174px;height:18.9px;border:0.6px solid #d8d8d8;"></div>
<div class="btn" style="left:154.4px;top:372px;width:21.2px;height:10px;"></div>
<div class="btn" style="left:178.7px;top:372px;width:29.7px;height:10px;"></div>
<span class="t " style="transform:scaleX(0.838);left:160.9px;top:373px;">OK</span>
<span class="t " style="transform:scaleX(0.825);left:185.6px;top:373px;">Cancel</span>
<div style="left:161.4px;top:26.2px;width:200px;height:336.2px;background:#f0f0f0;border:0.6px solid #d4d4d4;"></div>
<div style="left:161.4px;top:15.6px;width:23px;height:11.2px;background:#fff;border:0.6px solid #dadada;border-bottom:none;"></div>
<span class="t " style="transform:scaleX(0.852);left:164.2px;top:16.7px;">Legend</span>
<svg style="left:353.4px;top:27px" width="7" height="336" viewBox="690 103 7 336"><path d="M691 109l1.9-1.900 1.900 1.900M691 432.800l1.900 1.900 1.900-1.900" stroke="#444" stroke-width="0.800" fill="none"/></svg>
<!--LEGEND-->
</div>
<!-- LEGEND IMAGES -->
<svg style="left:498px;top:103px" width="192" height="295" viewBox="498 103 192 295" font-family="Liberation Sans, sans-serif">
  <rect x="499.100" y="104.300" width="189" height="169.400" fill="#8a8afa" stroke="#0a0ab8" stroke-width="1.500"/>
  <rect x="499.100" y="275.100" width="189" height="121.200" fill="#8f8ff6" stroke="#0a0ab8" stroke-width="1.500"/>
  <rect x="498.400" y="272.600" width="190.400" height="3.700" fill="#0a0ab8"/>
  <!-- cavity outline -->
  <rect x="534.200" y="118.300" width="148.200" height="115.400" fill="none" stroke="#a83074" stroke-width="0.700"/>
  <!-- axis dotted -->
  <path d="M612 148.200V240.600" stroke="#24244a" stroke-width="0.700" stroke-dasharray="0.900 1.100" opacity="0.850"/>
  <!-- post shape -->
  <rect x="589.500" y="165.700" width="44.800" height="68" fill="none" stroke="#16162e" stroke-width="0.900"/>
  <text x="612.400" y="189.900" font-size="9.300" fill="#16162e" text-anchor="middle">Post</text>
  <text x="612.400" y="200.800" font-size="9.300" fill="#16162e" text-anchor="middle">Shape</text>
  <!-- surface port label -->
  <text x="516.500" y="171.800" font-size="8.400" fill="#16162e" text-anchor="middle">Surface</text>
  <text x="516.500" y="182.800" font-size="8.400" fill="#16162e" text-anchor="middle">port</text>
  <!-- connector -->
  <rect x="519" y="188" width="15.400" height="29.600" fill="#6260aa"/>
  <rect x="519" y="193.800" width="15.400" height="18" fill="#444279"/>
  <rect x="534.400" y="200.400" width="55.200" height="5.300" fill="#444279"/>
  <path d="M519 202.900H589.400" stroke="#bcbce0" stroke-width="1" stroke-dasharray="1 1"/>
  <!-- Rprobe -->
  <text x="547.300" y="191.600" font-size="5.600" fill="#16162e" textLength="19.200" lengthAdjust="spacingAndGlyphs">Rprobe</text>
  <path d="M567.900 185.600V197.400" stroke="#15156a" stroke-width="0.900"/>
  <path d="M566.500 196.200h2.800l-1.400 3.900z" fill="#15156a"/>
  <!-- Lpost -->
  <path d="M538 240.700H609" stroke="#111" stroke-width="0.900"/>
  <path d="M535.600 240.700l7.400-2.300v4.600zM611.600 240.700l-7.400-2.300v4.600z" fill="#111"/>
  <text x="561.800" y="249.600" font-size="8" font-weight="bold" fill="#111" stroke="#111" stroke-width="0.250" textLength="20.400" lengthAdjust="spacingAndGlyphs">Lpost</text>
  <text x="613" y="255.200" font-size="8.400" fill="#16162e" text-anchor="middle">Surface</text>
  <text x="612.800" y="265.600" font-size="8.400" fill="#16162e" text-anchor="middle">contact post</text>
  <!-- cylinder -->
  <g fill="none" stroke="#14142c" stroke-width="0.800">
    <ellipse cx="593.200" cy="293.800" rx="22.900" ry="4.900"/>
    <path d="M570.300 293.800V343.800M616.100 293.800V343.800"/>
    <ellipse cx="593.200" cy="343.800" rx="22.900" ry="4.900"/>
  </g>
  <path d="M622.200 298V342" stroke="#111" stroke-width="0.700"/>
  <path d="M622.200 294.400l-1.900 5.600h3.800zM622.200 346l-1.900-5.600h3.800z" fill="#111"/>
  <text x="629.200" y="322.600" font-size="10.400" fill="#16162e" text-anchor="middle">H</text>
  <path d="M591 353.800H613" stroke="#111" stroke-width="0.700"/>
  <path d="M617.400 353.800l-5.800-1.700v3.400z" fill="#111"/>
  <text x="598.800" y="364.800" font-size="10.400" fill="#16162e" text-anchor="middle">R</text>
  <text x="597.600" y="387.400" font-size="11.200" fill="#16162e" text-anchor="middle" textLength="76" lengthAdjust="spacingAndGlyphs">Cylindrical post</text>
</svg>
<!-- CALLOUT -->
<div style="left:222.200px;top:194.600px;width:124.600px;height:55.400px;background:#fff;border:5px solid #0c1f74;border-radius:7px;box-shadow:1.500px 2.500px 5px rgba(0,0,40,0.400);">
  <span style="transform:scaleX(0.932);transform-origin:0 50%;left:19px;top:0;height:45.4px;line-height:44.6px;font-family:'DejaVu Sans Condensed','Liberation Sans',sans-serif;font-weight:normal;font-size:19px;color:#0f2070;-webkit-text-stroke:0.7px #0f2070;">Tap offset</span>
</div>
<svg style="left:370px;top:205px;overflow:visible" width="70" height="36" viewBox="370 205 70 36">
  <defs><filter id="sh" x="-20%" y="-20%" width="150%" height="160%"><feGaussianBlur in="SourceAlpha" stdDeviation="1.200"/><feOffset dx="1.200" dy="1.800"/><feComponentTransfer><feFuncA type="linear" slope="0.400"/></feComponentTransfer><feMerge><feMergeNode/><feMergeNode in="SourceGraphic"/></feMerge></filter></defs>
  <path d="M377 220h46.600l-4.600-8h4.400l9.200 10.500l-9.200 10.500h-4.400l4.600-8h-46.600z" fill="#0c1f74" filter="url(#sh)"/>
</svg>
</div>
</body>
</html>
